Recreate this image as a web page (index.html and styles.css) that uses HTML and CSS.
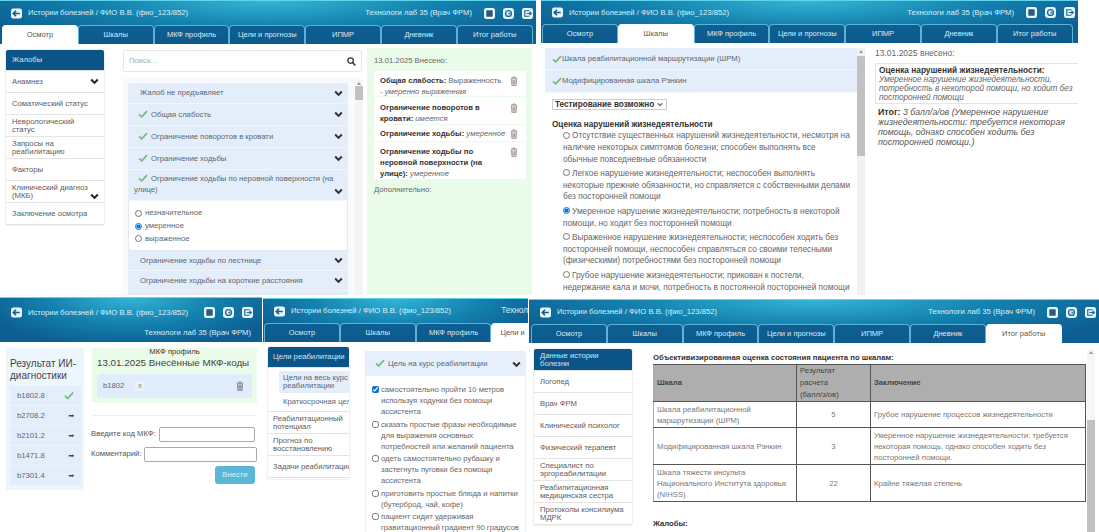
FILE: index.html
```html
<!DOCTYPE html>
<html lang="ru">
<head>
<meta charset="utf-8">
<title>Истории болезней</title>
<link rel="stylesheet" href="styles.css">
</head>
<body>
<svg class="sprite" aria-hidden="true">
  <symbol id="chev" viewBox="0 0 10 8"><path d="M1.2 1.8 5 5.6 8.8 1.8" fill="none" stroke="currentColor" stroke-width="2.3"/></symbol>
  <symbol id="check" viewBox="0 0 12 10"><path d="M1 5.5 4.4 8.600 11 1.400" fill="none" stroke="currentColor" stroke-width="2.2"/></symbol>
  <symbol id="trash" viewBox="0 0 10 12"><path d="M.8 2.500h8.400M3.500 2.500V1h3v1.500" fill="none" stroke="currentColor" stroke-width="1"/><path d="M1.800 3.500h6.400l-.5 8h-5.400z" fill="currentColor" opacity=".35"/><path d="M1.800 3.500l.5 8h5.400l.5-8M4 5v5M6 5v5" fill="none" stroke="currentColor" stroke-width=".9"/></symbol>
  <symbol id="back" viewBox="0 0 12 11"><rect width="12" height="11" rx="2.500" fill="#e9f7fc"/><path d="M2.500 5.500h7M5.500 2.500l-3 3 3 3" fill="none" stroke="#0f5e92" stroke-width="1.800"/></symbol>
  <symbol id="note" viewBox="0 0 12 12"><rect width="12" height="12" rx="2.500" fill="#e9f7fc"/><rect x="2.500" y="2.500" width="7" height="7" rx=".5" fill="#2a5a80"/></symbol>
  <symbol id="sync" viewBox="0 0 12 12"><rect width="12" height="12" rx="3.500" fill="#e9f7fc"/><circle cx="6" cy="6" r="3.200" fill="none" stroke="#1a6b9c" stroke-width="1.500"/><path d="M6 4.500 8.500 6 6 7.500Z" fill="#1a6b9c"/></symbol>
  <symbol id="exit" viewBox="0 0 12 12"><rect width="12" height="12" rx="2.500" fill="#e9f7fc"/><path d="M8 3H3v6h5" fill="none" stroke="#1a6b9c" stroke-width="1.300"/><path d="M5 6h5M8 4l2.200 2L8 8" fill="none" stroke="#1a6b9c" stroke-width="1.300"/></symbol>
</svg>

<!-- Окно 1: Осмотр -->
<section class="win win-a">
  <header class="bar">
    <div class="bar-top">
      <svg class="ico"><use href="#back"/></svg>
      <span class="bar-title">Истории болезней / ФИО В.В. (фио_123/852)</span>
      <span class="bar-user">Технологи лаб 35 (Врач ФРМ)</span>
      <span class="bar-icons"><svg class="ico"><use href="#note"/></svg><svg class="ico"><use href="#sync"/></svg><svg class="ico"><use href="#exit"/></svg></span>
    </div>
    <nav class="tabs">
      <span class="tab on">Осмотр</span><span class="tab">Шкалы</span><span class="tab">МКФ профиль</span><span class="tab">Цели и прогнозы</span><span class="tab">ИПМР</span><span class="tab">Дневник</span><span class="tab">Итог работы</span>
    </nav>
  </header>
  <div class="a-body">
    <aside class="side a-side">
      <div class="side-item on">Жалобы</div>
      <div class="side-item has-chev">Анамнез<svg class="chev"><use href="#chev"/></svg></div>
      <div class="side-item">Соматический статус</div>
      <div class="side-item">Неврологический статус</div>
      <div class="side-item">Запросы на реабилитацию</div>
      <div class="side-item">Факторы</div>
      <div class="side-item has-chev low">Клинический диагноз (МКБ)<svg class="chev"><use href="#chev"/></svg></div>
      <div class="side-item">Заключение осмотра</div>
    </aside>
    <div class="a-main">
      <div class="search"><span>Поиск...</span><svg class="search-ico" viewBox="0 0 10 10"><circle cx="4" cy="4" r="3" fill="none" stroke="currentColor" stroke-width="1.400"/><path d="M6.300 6.300 9.300 9.300" stroke="currentColor" stroke-width="1.600"/></svg></div>
      <div class="a-scroll">
        <div class="acc">
          <div class="acc-row"><span>Жалоб не предъявляет</span><svg class="chev"><use href="#chev"/></svg></div>
          <div class="acc-row"><span><svg class="check"><use href="#check"/></svg>Общая слабость</span><svg class="chev"><use href="#chev"/></svg></div>
          <div class="acc-row"><span><svg class="check"><use href="#check"/></svg>Ограничение поворотов в кровати</span><svg class="chev"><use href="#chev"/></svg></div>
          <div class="acc-row"><span><svg class="check"><use href="#check"/></svg>Ограничение ходьбы</span><svg class="chev"><use href="#chev"/></svg></div>
          <div class="acc-row tall"><span><svg class="check"><use href="#check"/></svg>Ограничение ходьбы по неровной поверхности (на улице)</span><svg class="chev"><use href="#chev"/></svg></div>
          <div class="acc-open">
            <label class="opt"><input type="radio" name="a1">незначительное</label>
            <label class="opt"><input type="radio" name="a1" checked>умеренное</label>
            <label class="opt"><input type="radio" name="a1">выраженное</label>
          </div>
          <div class="acc-row"><span>Ограничение ходьбы по лестнице</span><svg class="chev"><use href="#chev"/></svg></div>
          <div class="acc-row"><span>Ограничение ходьбы на короткие расстояния</span><svg class="chev"><use href="#chev"/></svg></div>
          <div class="acc-row"></div>
        </div>
        <div class="sbar a-sbar"><i class="thumb"></i></div>
      </div>
    </div>
    <aside class="a-green">
      <div class="a-date">13.01.2025 Внесено:</div>
      <div class="note-card c1"><p><b>Общая слабость:</b> Выраженность<br><i>- умеренно выраженная</i></p><svg class="trash"><use href="#trash"/></svg></div>
      <div class="note-card c2"><p><b>Ограничение поворотов в кровати:</b> <i>имеется</i></p><svg class="trash"><use href="#trash"/></svg></div>
      <div class="note-card c3"><p><b>Ограничение ходьбы:</b> <i>умеренное</i></p><svg class="trash"><use href="#trash"/></svg></div>
      <div class="note-card c4"><p><b>Ограничение ходьбы по неровной поверхности (на улице):</b> <i>умеренное</i></p><svg class="trash"><use href="#trash"/></svg></div>
      <div class="a-more">Дополнительно:</div>
    </aside>
  </div>
</section>

<!-- Окно 2: Шкалы -->
<section class="win win-b">
  <header class="bar">
    <div class="bar-top">
      <svg class="ico"><use href="#back"/></svg>
      <span class="bar-title">Истории болезней / ФИО В.В. (фио_123/852)</span>
      <span class="bar-user">Технологи лаб 35 (Врач ФРМ)</span>
      <span class="bar-icons"><svg class="ico"><use href="#note"/></svg><svg class="ico"><use href="#sync"/></svg><svg class="ico"><use href="#exit"/></svg></span>
    </div>
    <nav class="tabs">
      <span class="tab">Осмотр</span><span class="tab on">Шкалы</span><span class="tab">МКФ профиль</span><span class="tab">Цели и прогнозы</span><span class="tab">ИПМР</span><span class="tab">Дневник</span><span class="tab">Итог работы</span>
    </nav>
  </header>
  <div class="b-body">
    <div class="b-main">
      <div class="b-row"><svg class="check"><use href="#check"/></svg>Шкала реабилитационной маршрутизации (ШРМ)</div>
      <div class="b-row"><svg class="check"><use href="#check"/></svg>Модифицированная шкала Рэнкин</div>
      <div class="b-form">
        <div class="b-select-wrap">
          <select class="b-select"><option>Тестирование возможно</option></select>
          <svg class="chev b-select-chev"><use href="#chev"/></svg>
        </div>
        <h3 class="b-h">Оценка нарушений жизнедеятельности</h3>
        <label class="b-opt"><input type="radio" name="b1">Отсутствие существенных нарушений жизнедеятельности, несмотря на<br>наличие некоторых симптомов болезни; способен выполнять все<br>обычные повседневные обязанности</label>
        <label class="b-opt"><input type="radio" name="b1">Легкое нарушение жизнедеятельности; неспособен выполнять<br>некоторые прежние обязанности, но справляется с собственными делами<br>без посторонней помощи</label>
        <label class="b-opt"><input type="radio" name="b1" checked>Умеренное нарушение жизнедеятельности; потребность в некоторой<br>помощи, но ходит без посторонней помощи</label>
        <label class="b-opt"><input type="radio" name="b1">Выраженное нарушение жизнедеятельности; неспособен ходить без<br>посторонней помощи, неспособен справляться со своими телесными<br>(физическими) потребностями без посторонней помощи</label>
        <label class="b-opt"><input type="radio" name="b1">Грубое нарушение жизнедеятельности; прикован к постели,<br>недержание кала и мочи, потребность в постоянной посторонней помощи</label>
      </div>
    </div>
    <div class="sbar b-sbar"><i class="thumb"></i></div>
    <aside class="b-aside">
      <div class="b-date">13.01.2025 внесено:</div>
      <div class="b-card"><b>Оценка нарушений жизнедеятельности:</b><br><i>Умеренное нарушение жизнедеятельности,<br>потребность в некоторой помощи, но ходит без<br>посторонней помощи</i></div>
      <p class="b-sum"><b>Итог:</b> <i>3 балл/а/ов (Умеренное нарушение жизнедеятельности: требуется некоторая помощь, однако способен ходить без посторонней помощи.)</i></p>
    </aside>
  </div>
</section>

<!-- Окно 3: МКФ профиль -->
<section class="win win-c">
  <header class="bar c-bar">
    <div class="bar-top">
      <svg class="ico"><use href="#back"/></svg>
      <span class="bar-title">Истории болезней / ФИО В.В. (фио_123/852)</span>
      <span class="bar-icons push"><svg class="ico"><use href="#note"/></svg><svg class="ico"><use href="#sync"/></svg><svg class="ico"><use href="#exit"/></svg></span>
    </div>
    <div class="c-user">Технологи лаб 35 (Врач ФРМ)</div>
  </header>
  <div class="c-body">
    <aside class="c-ai">
      <h2 class="c-ai-h">Результат ИИ-диагностики</h2>
      <div class="c-code">b1802.8<svg class="check big"><use href="#check"/></svg></div>
      <div class="c-code">b2708.2<span class="arrow">➡</span></div>
      <div class="c-code">b2101.2<span class="arrow">➡</span></div>
      <div class="c-code">b1471.8<span class="arrow">➡</span></div>
      <div class="c-code">b7301.4<span class="arrow">➡</span></div>
    </aside>
    <div class="c-main">
      <div class="c-green">
        <div class="c-cap">МКФ профиль</div>
        <h2 class="c-h">13.01.2025 Внесённые МКФ-коды</h2>
        <div class="c-card"><span>b1802</span><span class="c-mini">8</span><svg class="trash c-trash"><use href="#trash"/></svg></div>
      </div>
      <hr class="c-hr">
      <div class="c-field"><label>Введите код МКФ:</label><span class="c-input"></span></div>
      <div class="c-field"><label>Комментарий:</label><span class="c-input"></span></div>
      <div class="c-actions"><span class="c-btn">Внести</span></div>
    </div>
  </div>
</section>

<!-- Окно 4: Цели и прогнозы -->
<section class="win win-d">
  <header class="bar">
    <div class="bar-top">
      <svg class="ico"><use href="#back"/></svg>
      <span class="bar-title">Истории болезней / ФИО В.В. (фио_123/852)</span>
      <span class="d-user">Технол</span>
    </div>
    <nav class="tabs">
      <span class="tab">Осмотр</span><span class="tab">Шкалы</span><span class="tab">МКФ профиль</span><span class="tab on d-tab">Цели и</span>
    </nav>
  </header>
  <div class="d-body">
    <aside class="side d-side">
      <div class="side-item on">Цели реабилитации</div>
      <div class="d-sub sel"><span>Цели на весь курс<br>реабилитации</span></div>
      <div class="d-sub">Краткосрочная цель</div>
      <div class="side-item">Реабилитационный потенциал</div>
      <div class="side-item">Прогноз по восстановлению</div>
      <div class="side-item nowrap">Задачи реабилитации</div>
    </aside>
    <div class="d-card">
      <div class="d-head"><span><svg class="check"><use href="#check"/></svg>Цель на курс реабилитации</span><svg class="chev"><use href="#chev"/></svg></div>
      <div class="d-list">
        <label class="d-opt"><input type="checkbox" checked>самостоятельно пройти 10 метров используя ходунки без помощи ассистента</label>
        <label class="d-opt"><input type="checkbox">сказать простые фразы необходимые для выражения основных потребностей или желаний пациента</label>
        <label class="d-opt"><input type="checkbox">одеть самостоятельно рубашку и застегнуть пуговки без помощи ассистента</label>
        <label class="d-opt"><input type="checkbox">приготовить простые блюда и напитки (бутерброд, чай, кофе)</label>
        <label class="d-opt"><input type="checkbox">пациент сидит удерживая гравитационный градиент 90 градусов</label>
      </div>
    </div>
  </div>
</section>

<!-- Окно 5: Итог работы -->
<section class="win win-e">
  <header class="bar">
    <div class="bar-top">
      <svg class="ico"><use href="#back"/></svg>
      <span class="bar-title">Истории болезней / ФИО В.В. (фио_123/852)</span>
      <span class="bar-user">Технологи лаб 35 (Врач ФРМ)</span>
      <span class="bar-icons"><svg class="ico"><use href="#note"/></svg><svg class="ico"><use href="#sync"/></svg><svg class="ico"><use href="#exit"/></svg></span>
    </div>
    <nav class="tabs">
      <span class="tab">Осмотр</span><span class="tab">Шкалы</span><span class="tab">МКФ профиль</span><span class="tab">Цели и прогнозы</span><span class="tab">ИПМР</span><span class="tab">Дневник</span><span class="tab on">Итог работы</span>
    </nav>
  </header>
  <div class="e-body">
    <aside class="side e-side">
      <div class="side-item on">Данные истории болезни</div>
      <div class="side-item">Логопед</div>
      <div class="side-item">Врач ФРМ</div>
      <div class="side-item">Клинический психолог</div>
      <div class="side-item">Физический терапевт</div>
      <div class="side-item">Специалист по эргореабилитации</div>
      <div class="side-item">Реабилитационная медицинская сестра</div>
      <div class="side-item">Протоколы консилиума МДРК</div>
    </aside>
    <div class="e-main">
      <h3 class="e-h">Объективизированная оценка состояния пациента по шкалам:</h3>
      <table class="e-table">
        <thead>
          <tr class="e-head"><th class="e-c1">Шкала</th><th class="e-c2">Результат<br>расчета<br>(балл/з/ов)</th><th>Заключение</th></tr>
        </thead>
        <tbody>
          <tr class="e-r1"><td>Шкала реабилитационной маршрутизации (ШРМ)</td><td class="e-num">5</td><td>Грубое нарушение процессов жизнедеятельности</td></tr>
          <tr class="e-r2"><td>Модифицированная шкала Рэнкин</td><td class="e-num">3</td><td>Умеренное нарушение жизнедеятельности: требуется некоторая помощь, однако способен ходить без посторонней помощи.</td></tr>
          <tr class="e-r2"><td>Шкала тяжести инсульта Национального Института здоровья (NIHSS)</td><td class="e-num">22</td><td>Крайне тяжелая степень</td></tr>
        </tbody>
      </table>
      <h3 class="e-h e-h2">Жалобы:</h3>
    </div>
    <div class="sbar e-sbar"><i class="thumb"></i></div>
  </div>
</section>
</body>
</html>
```

FILE: styles.css
```css
* { box-sizing: border-box; }
html, body { margin: 0; padding: 0; background: #fff; }
body {
  position: relative;
  width: 1099px;
  height: 532px;
  overflow: hidden;
  font: 7.700px/10px "Liberation Sans", Arial, sans-serif;
  color: #666;
}
.sprite { position: absolute; width: 0; height: 0; }
p, h2, h3 { margin: 0; font-weight: normal; font-size: inherit; }

/* collage windows */
.win { position: absolute; overflow: hidden; background: #fff; }
.win-a { left: 0; top: 0; width: 536px; height: 295px; }
.win-b { left: 541px; top: 0; width: 537px; height: 295px; }
.win-c { left: 0; top: 297px; width: 262px; height: 235px; }
.win-d { left: 263px; top: 298px; width: 265px; height: 234px; }
.win-e { left: 529px; top: 299px; width: 570px; height: 233px; }

/* header */
.bar {
  height: 44px;
  background: radial-gradient(ellipse 60% 110% at 50% 0, #35b6d8 0, #1380ad 55%, #0d5f93 100%);
  box-shadow: inset 0 1px 0 #5fd4ea;
  display: flex;
  flex-direction: column;
}
.bar-top { height: 25px; flex: none; display: flex; align-items: center; padding: 1px 3px 0 11px; }
.ico { width: 11px; height: 11px; flex: none; }
.bar-title { margin-left: 6px; color: #d8f0fa; white-space: nowrap; }
.bar-user { margin-left: auto; color: #d8f0fa; white-space: nowrap; }
.bar-icons { display: flex; gap: 8px; margin-left: 12px; }
.bar-icons.push { margin-left: auto; }
.tabs { flex: 1; display: flex; padding: 0 2px; }
.tab {
  flex: 0 0 75.800px;
  display: flex; align-items: center; justify-content: center;
  color: #d5ecf7;
  white-space: nowrap;
  font-size: 7.500px;
  border: 1px solid #5cb3d3;
  border-bottom: 0;
  border-radius: 4px 4px 0 0;
  background: linear-gradient(#0d5f93, #0d5a8c);
}
.tab.on { background: #fff; color: #555; border-color: #fff; }

/* side menus */
.side { flex: none; background: #fff; box-shadow: 0 0 2px #ccd; }
.side-item {
  position: relative;
  height: 22px;
  padding: 0 6px;
  display: flex; align-items: center;
  line-height: 8px;
  color: #5c5c5c;
  border-bottom: 1px solid #e4e4e4;
}
.side-item.on { background: #0b5488; color: #cfe6f4; border-radius: 2px 2px 0 0; }
.has-chev .chev { position: absolute; right: 5px; top: 7px; color: #222; }
.has-chev.low .chev { top: 12px; }
.chev { width: 9px; height: 7px; flex: none; color: #333; }
.check { width: 10px; height: 8px; color: #7dba84; flex: none; margin-right: 3px; vertical-align: -1px; }
.trash { width: 8px; height: 10px; color: #888; flex: none; }

/* scrollbars */
.sbar { flex: none; width: 8px; background: #f1f1f1; position: relative; }
.sbar::before {
  content: "";
  position: absolute; left: 2px; top: 2px;
  border: 2px solid transparent;
  border-top: 0;
  border-bottom: 3px solid #999;
}
.thumb { position: absolute; left: 0; width: 100%; background: #c1c1c1; display: block; }

/* window A */
.a-body { display: flex; height: 251px; padding: 4px 3px 0 6px; }
.a-side { width: 98px; height: 175px; margin-top: 2px; }
.a-side .side-item.on { height: 21px; }
.a-main { width: 239px; margin-left: 19px; padding-top: 2px; flex: none; }
.search {
  height: 22px;
  border: 1px solid #e6e6e6;
  border-radius: 2px;
  display: flex; align-items: center; justify-content: space-between;
  padding: 0 5px;
  color: #aaa;
}
.search-ico { width: 9px; height: 9px; color: #333; }
.a-scroll { display: flex; margin-top: 6px; height: 217px; background: #f7fafe; padding-top: 5px; padding-left: 5px; }
.acc { width: 220px; flex: none; overflow: hidden; }
.acc-row {
  min-height: 22px;
  display: flex; align-items: center; justify-content: space-between;
  padding: 0 5px 0 6px;
  background: #e4eefb;
  border-bottom: 1px solid #f2f6fc;
  color: #5a6672;
}
.acc-row:first-child { min-height: 21px; padding-left: 12px; border-radius: 3px 3px 0 0; }
.acc-row .check { margin-left: 4px; }
.acc-row.tall { height: 31px; align-items: flex-end; padding-bottom: 5px; }
.acc-row.tall span { line-height: 11px; }
.acc-row:nth-child(7), .acc-row:nth-child(8) { min-height: 20px; padding-left: 12px; }
.acc-open { height: 50px; background: #fff; padding: 6px 2px 0 6px; border: 1px solid #e0e9f4; border-top: 0; }
.opt { display: flex; align-items: center; height: 12.800px; }
.opt input { width: 7px; height: 7px; margin: 0 3px 0 0; accent-color: #0a6fd8; }
.a-sbar { margin-left: 7px; width: 8px; height: 215px; margin-top: -3px; background: #f4f4f4; }
.a-sbar .thumb { top: 6px; height: 14px; }
.a-green { width: 165px; margin-left: 5px; height: 251px; flex: none; background: #eafbea; padding: 8px 6px 0 7px; }
.a-date { height: 15px; line-height: 10px; color: #666; }
.note-card {
  display: flex; justify-content: space-between; align-items: flex-start;
  background: #fff;
  margin-bottom: 1px;
  padding: 3.500px 5px 0 6px;
  line-height: 11px;
  color: #666;
}
.note-card p { width: 128px; }
.note-card b { color: #333; }
.note-card .trash { margin-top: 1px; margin-right: 3px; }
.c1 { height: 25px; }
.c2 { height: 27px; padding-top: 4.500px; }
.c3 { height: 16px; padding-top: 2.500px; }
.c4 { height: 37px; }
.a-more { margin-top: 6px; color: #666; }

/* window B */
.win-b .bar { height: 43px; }
.win-b .bar-top { height: 24px; }
.win-b .tabs { padding: 0 1px; }
.b-body { display: flex; height: 252px; padding: 5px 0 0 4px; }
.b-main { width: 312px; flex: none; }
.b-row { height: 22px; display: flex; align-items: center; padding-left: 7px; background: #e4eefb; border-bottom: 1px solid #f4f8fd; color: #5a6672; white-space: nowrap; }
.b-row + .b-row { height: 23px; }
.b-row .check { margin-right: 0; }
.b-form { padding: 6px 3px 0 7px; }
.b-select-wrap { position: relative; width: 115px; height: 11px; }
.b-select { display: block; width: 115px; height: 11px; padding: 0 0 0 2px; font: bold 8.200px/9px "Liberation Sans", sans-serif; color: #333; border: 1px solid #ccc; border-radius: 0; background: #fff; appearance: none; }
.b-select-chev { position: absolute; right: 4px; top: 3px; width: 6px; height: 5px; color: #777; pointer-events: none; }
.b-h { margin-top: 10px; font-weight: bold; color: #333; line-height: 10px; height: 10px; font-size: 8.200px; }
.b-opt { display: block; margin-left: 11px; font-size: 8.300px; line-height: 11.800px; margin-bottom: 2.500px; color: #666; white-space: nowrap; }
.b-opt input { width: 7px; height: 7px; margin: 0 2px 0 0; accent-color: #0a6fd8; vertical-align: -.5px; }
.b-sbar { width: 8px; height: 247px; }
.b-sbar .thumb { top: 8px; height: 100px; }
.b-aside { width: 215px; margin-left: 10px; flex: none; }
.b-date { height: 15px; color: #666; line-height: 10px; font-size: 8.500px; }
.b-card { border: 1px solid #e5e5e5; border-right: 0; padding: 2px 0 2px 3px; width: 215px; height: 41px; font-size: 8.200px; line-height: 9px; color: #666; white-space: nowrap; }
.b-card b { color: #333; font-size: 8.300px; }
.b-sum { margin-top: 3px; margin-left: 3px; width: 195px; font-size: 8.800px; line-height: 10px; color: #555; }
.b-sum b { color: #333; }

/* window C */
.c-bar { height: 45px; }
.c-bar .bar-top { height: 31px; padding: 0 9px 0 11px; }
.c-user { text-align: right; padding-right: 11px; color: #d8f0fa; }
.c-body { display: flex; padding: 6px 6px 0 6px; }
.c-ai { width: 78px; height: 142px; flex: none; background: #eef6fd; padding: 10px 3px 0 4px; }
.c-ai-h { font-size: 10px; line-height: 12px; color: #444; height: 28px; }
.c-code { height: 20px; display: flex; align-items: center; justify-content: space-between; padding: 0 7px 0 7px; background: #e4eefb; border-bottom: 1px solid #f0f5fc; color: #5a6672; }
.check.big { width: 10px; height: 9px; margin: 0; }
.arrow { font-size: 7px; color: #16568a; font-family: "DejaVu Sans", sans-serif; }
.c-main { width: 165px; margin-left: 8px; flex: none; }
.c-green { height: 55px; background: #eafbea; padding: 0 5px; position: relative; }
.c-cap { text-align: center; color: #333; height: 9px; line-height: 8px; }
.c-h { font-size: 9.800px; line-height: 12px; color: #444; white-space: nowrap; height: 17px; }
.c-card { height: 24px; background: #e1ecfb; border-radius: 3px; display: flex; align-items: center; padding: 0 8px 0 6px; color: #5a6672; }
.c-mini { margin-left: 11px; font-size: 6px; color: #888; width: 9px; text-align: center; background: #e9f1fb; }
.c-trash { margin-left: auto; color: #6c7784; }
.c-hr { border: 0; border-top: 1px solid #f0f0f0; margin: 12px 0 0 0; }
.c-field { display: flex; align-items: center; height: 16px; margin-top: 10px; color: #555; margin-left: -1px; gap: 3px; }
.c-field + .c-field { margin-top: 4px; gap: 2px; }
.c-input { flex: 1; height: 15px; border: 1px solid #aaa; border-radius: 2px; margin-right: 2px; }
.c-field + .c-field .c-input { margin-right: 0; }
.c-actions { display: flex; justify-content: flex-end; margin-top: 4px; padding-right: 2px; }
.c-btn { width: 40px; height: 18px; background: #5cb7d6; color: #d8f0fa; border-radius: 3px; display: flex; align-items: center; justify-content: center; }

/* window D */
.d-user { margin-left: auto; margin-right: -3px; color: #d8f0fa; font-size: 8.200px; white-space: nowrap; }
.win-d .tabs { padding: 0 1px; }
.d-tab.on { justify-content: flex-start; padding-left: 8px; flex-basis: 40px; }
.d-body { display: flex; padding: 5px 2px 0 5px; }
.d-side { width: 81px; height: 132px; overflow: hidden; }
.d-side .side-item { padding-left: 5px; }
.d-side .side-item.on { white-space: nowrap; margin-bottom: 3px; height: 21px; }
.d-side .nowrap { white-space: nowrap; }
.d-sub { margin-left: 11px; display: flex; align-items: center; padding-left: 4px; line-height: 8px; color: #5a6672; white-space: nowrap; }
.d-sub.sel { background: #e3eefa; height: 22px; }
.d-sub:not(.sel) { height: 19px; border-bottom: 1px solid #e4e4e4; margin-left: 0; padding-left: 15px; }
.d-card { width: 161px; margin-left: 16px; flex: none; border: 1px solid #e8eef6; margin-top: 4px; height: 190px; overflow: hidden; }
.d-head { height: 24px; background: #e6f0fc; display: flex; align-items: center; justify-content: space-between; padding: 0 4px 0 9px; color: #5a6672; }
.d-list { padding: 8px 3px 0 6px; }
.d-opt { display: block; line-height: 11px; padding-left: 9px; margin-bottom: 1.500px; color: #666; text-indent: -9px; }
.d-opt input { width: 7px; height: 7px; margin: 0 2px 0 0; accent-color: #0a6fd8; vertical-align: -1px; }

/* window E */
.e-body { display: flex; height: 189px; padding: 6px 4px 0 5px; }
.e-side { width: 98px; height: 176px; }
.e-main { width: 433px; margin-left: 21px; flex: none; }
.e-h { font-weight: bold; color: #333; height: 9px; line-height: 9px; margin-top: 4px; }
.e-table { border-collapse: collapse; width: 433px; margin-top: 2px; table-layout: fixed; line-height: 11px; color: #777; }
.e-table th, .e-table td { border: 1px solid #555; padding: 0 3px; font-weight: normal; text-align: left; vertical-align: middle; }
.e-table th:first-child, .e-table td:first-child { border-left-color: #aaa; }
.e-table th { background: #aeaeae; color: #444; line-height: 12px; }
.e-table th:nth-child(1), .e-table th:nth-child(3) { font-weight: bold; }
.e-c1 { width: 143px; }
.e-c2 { width: 74px; }
.e-head { height: 36px; }
.e-r1 { height: 26px; }
.e-r2 { height: 37px; }
.e-table .e-num { text-align: center; }
.e-h2 { margin-top: 17px; }
.e-sbar { height: 183px; margin-left: 1px; background: #f6f6f6; }
.e-sbar .thumb { top: 71px; height: 112px; }
```
